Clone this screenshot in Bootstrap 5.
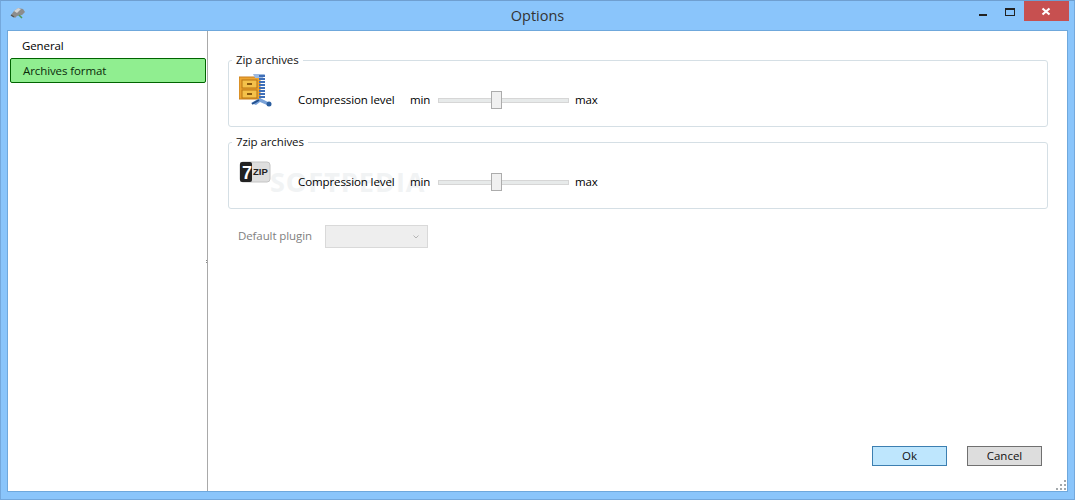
<!DOCTYPE html>
<html lang="en">
<head>
<meta charset="utf-8">
<title>Options</title>
<link href="https://cdn.jsdelivr.net/npm/bootstrap@5.3.0/dist/css/bootstrap.min.css" rel="stylesheet">
<style>
html,body{margin:0;height:500px;overflow:hidden;background:#8ac5fb}
body{font-family:"Open Sans","Noto Sans",sans-serif;font-size:11.5px;letter-spacing:-.1px;color:#000;line-height:16px}
.win{width:1075px;height:500px;border:1px solid #74a8dc;border-top-color:#6f9fd0;background:#8ac5fb}
.tbar{height:29px;position:relative;flex:none}
.ttl{font-size:14.5px;letter-spacing:0;line-height:29px;color:#333;text-align:center;width:100%}
.apico{position:absolute;left:9px;top:5px}
.wbtns{position:absolute;right:5px;top:0}
.wb{width:27px;height:20px}
.wbx{width:45px;height:20px;background:#c75050}
.body-area{height:462px;margin:0 6px;background:#fff;border:1px solid #6fa8dc;position:relative}
.side{width:200px;flex:none;border-right:1px solid #a9a9a9;padding:2px 1px 2px 2px}
.sitem{height:25px;padding:5px 0 0 12px;line-height:16px}
.sitem.act{background:#90ee90;border:1px solid #006400;border-radius:2px;padding:4px 0 0 12px;color:#0b2b0b}
.main{padding:22px 19px 0 20px;min-width:0}
.grp{border:1px solid #d5dfe5;border-radius:3px;height:74px;margin:0 0 8px;padding:0 0 0 10px;min-width:0}
.grp legend{float:none;width:auto;font-size:11.5px;line-height:14px;padding:0 4px;margin:0 0 0 -7px;height:14px;color:#111}
.grprow{margin-top:1px;height:50px}
.gic{width:34px;flex:none}
.gic7{padding-top:6px}
.gicz{padding-top:3px}
.gic svg{display:block}
.lbl{margin-left:25px;width:112px;padding-top:24px}
.mn{width:28px;padding-top:24px}
.slid{width:131px;height:18px;margin-top:23px;position:relative;flex:none}
.trk{height:5px;margin-top:7px;background:#e7eaea;border:1px solid #d6d6d6}
.thm{position:absolute;left:53px;top:0;width:11px;height:18px;background:#f0f0f0;border:1px solid #acacac}
.mx{margin-left:6px;padding-top:24px}
.dis{color:#7f7f7f;width:87px;padding-top:3px}
.plugrow{margin:16px 0 0 10px}
.plugsel{width:103px;height:23px;background:#eee;border:1px solid #d9d9d9}
.act-btn{width:75px;height:20px;line-height:18px;font-size:11.5px;text-align:center;border-radius:0;padding:0;color:#111}
.okb{background:#bee6fd;border:1px solid #3c7fb1}
.cnb{background:#ddd;border:1px solid #707070;margin-left:20px}
.btnbar{position:absolute;right:25px;bottom:25px}
.grip{position:absolute;right:0;bottom:0}
.splt{position:absolute;left:198px;top:229px}
.wmk{position:absolute;left:262px;top:131px;font-size:27px;font-weight:700;letter-spacing:1px;line-height:40px;color:#f1f3f4}
.onw{position:relative}
</style>
</head>
<body>
<div class="win d-flex flex-column">
  <div class="tbar">
    <svg class="apico" width="16" height="14" viewBox="0 0 16 14"><path d="M1 9 4 5l4-3 5 1 2 3-3 3-5 1-2 2z" fill="#8c8c8c"/><path d="M4 5l4-3 3 1-4 4z" fill="#d5d5d5"/><path d="M9 9l3 3" stroke="#4f9a5b" stroke-width="1.500"/><path d="M1 9l3 2" stroke="#555" stroke-width="1.500"/></svg>
    <div class="ttl">Options</div>
    <div class="wbtns d-flex">
      <div class="wb"><svg width="27" height="20" class="d-block"><rect x="9" y="13" width="8" height="2" fill="#222"/></svg></div>
      <div class="wb"><svg width="27" height="20" class="d-block"><rect x="8.500" y="7.500" width="9" height="7" fill="none" stroke="#222"/><rect x="8" y="7" width="10" height="2" fill="#222"/></svg></div>
      <div class="wbx"><svg width="45" height="20" class="d-block"><path d="M18.500 7.500l7 6M25.500 7.500l-7 6" stroke="#fff" stroke-width="2.200"/></svg></div>
    </div>
  </div>
  <div class="body-area d-flex">
    <div class="side">
      <div class="sitem">General</div>
      <div class="sitem act">Archives format</div>
    </div>
    <svg class="splt" width="3" height="5"><rect y="0" width="1" height="1" fill="#888"/><rect y="2" width="1" height="1" fill="#888"/></svg>
    <div class="main flex-grow-1">
      <div class="wmk">SOFTPEDIA</div>
      <fieldset class="grp onw">
        <legend>Zip archives</legend>
        <div class="grprow d-flex">
          <div class="gic gicz">
            <svg width="34" height="36" viewBox="0 0 34 36"><rect x="0" y="6" width="21" height="22" fill="#eda531" stroke="#c97f1c"/><rect x="3" y="9" width="15" height="8" fill="#f4c14a" stroke="#b87512"/><rect x="3" y="19" width="15" height="8" fill="#f4c14a" stroke="#b87512"/><rect x="8" y="12" width="5" height="2" fill="#8a5a10"/><rect x="8" y="22" width="5" height="2" fill="#8a5a10"/><path d="M14 3h12l-2 4h-8z" fill="#9db9de"/><path d="M23 4v24" stroke="#3f6fb8" stroke-width="6" stroke-dasharray="2 1"/><path d="M12 32l9-5 10 5-3 2-7-3-4 3z" fill="#79a2d8"/><path d="M20 29l-7 4" stroke="#24518f" stroke-width="2"/><circle cx="30" cy="33" r="2.500" fill="#2b5e9f"/></svg>
          </div>
          <div class="lbl">Compression level</div>
          <div class="mn">min</div>
          <div class="slid"><div class="trk"></div><div class="thm"></div></div>
          <div class="mx">max</div>
        </div>
      </fieldset>
      <fieldset class="grp onw">
        <legend>7zip archives</legend>
        <div class="grprow d-flex">
          <div class="gic gic7">
            <svg width="34" height="36" viewBox="0 0 34 36"><rect x="1" y="6" width="30" height="20" rx="3" fill="#dedede" stroke="#c4c4c4"/><rect x="1" y="6" width="12" height="20" rx="2" fill="#222"/><text x="3" y="23" font-family="Liberation Sans" font-weight="700" font-size="18" fill="#fff">7</text><text x="14" y="19" font-family="Liberation Sans" font-weight="700" font-size="9.500" letter-spacing="0" fill="#222">ZIP</text></svg>
          </div>
          <div class="lbl">Compression level</div>
          <div class="mn">min</div>
          <div class="slid"><div class="trk"></div><div class="thm"></div></div>
          <div class="mx">max</div>
        </div>
      </fieldset>
      <div class="plugrow d-flex onw">
        <span class="dis">Default plugin</span>
        <div class="plugsel d-flex align-items-center justify-content-end pe-2"><svg width="6" height="4"><path d="M.5.5 3 3 5.500.5" fill="none" stroke="#b5b5b5"/></svg></div>
      </div>
    </div>
    <div class="btnbar d-flex">
      <button type="button" class="btn act-btn okb">Ok</button>
      <button type="button" class="btn act-btn cnb">Cancel</button>
    </div>
    <svg class="grip" width="12" height="12"><g fill="#a3a8ab"><rect x="9" y="1" width="2" height="2"/><rect x="5" y="5" width="2" height="2"/><rect x="9" y="5" width="2" height="2"/><rect x="1" y="9" width="2" height="2"/><rect x="5" y="9" width="2" height="2"/><rect x="9" y="9" width="2" height="2"/></g></svg>
  </div>
</div>
<script src="https://cdn.jsdelivr.net/npm/bootstrap@5.3.0/dist/js/bootstrap.bundle.min.js"></script>
</body>
</html>
